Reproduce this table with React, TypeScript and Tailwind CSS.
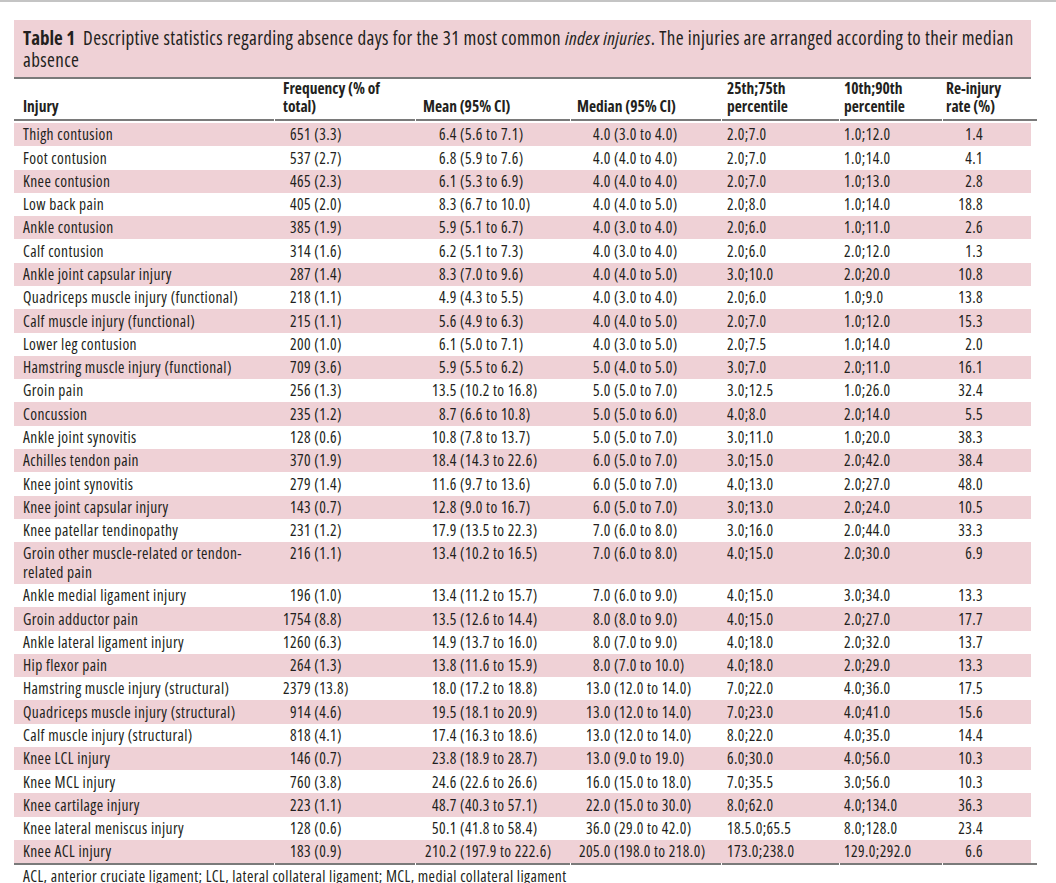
import React from "react";

// column grid shared by header, rows and rules
const COLS = "grid grid-cols-[260px_140px_154px_150px_117px_102px_94px]";

type Row = [string, string, string, string, string, string, string];

const rows: Row[] = [
  ["Thigh contusion", "651 (3.3)", "6.4 (5.6 to 7.1)", "4.0 (3.0 to 4.0)", "2.0;7.0", "1.0;12.0", "1.4"],
  ["Foot contusion", "537 (2.7)", "6.8 (5.9 to 7.6)", "4.0 (4.0 to 4.0)", "2.0;7.0", "1.0;14.0", "4.1"],
  ["Knee contusion", "465 (2.3)", "6.1 (5.3 to 6.9)", "4.0 (4.0 to 4.0)", "2.0;7.0", "1.0;13.0", "2.8"],
  ["Low back pain", "405 (2.0)", "8.3 (6.7 to 10.0)", "4.0 (4.0 to 5.0)", "2.0;8.0", "1.0;14.0", "18.8"],
  ["Ankle contusion", "385 (1.9)", "5.9 (5.1 to 6.7)", "4.0 (3.0 to 4.0)", "2.0;6.0", "1.0;11.0", "2.6"],
  ["Calf contusion", "314 (1.6)", "6.2 (5.1 to 7.3)", "4.0 (3.0 to 4.0)", "2.0;6.0", "2.0;12.0", "1.3"],
  ["Ankle joint capsular injury", "287 (1.4)", "8.3 (7.0 to 9.6)", "4.0 (4.0 to 5.0)", "3.0;10.0", "2.0;20.0", "10.8"],
  ["Quadriceps muscle injury (functional)", "218 (1.1)", "4.9 (4.3 to 5.5)", "4.0 (3.0 to 4.0)", "2.0;6.0", "1.0;9.0", "13.8"],
  ["Calf muscle injury (functional)", "215 (1.1)", "5.6 (4.9 to 6.3)", "4.0 (4.0 to 5.0)", "2.0;7.0", "1.0;12.0", "15.3"],
  ["Lower leg contusion", "200 (1.0)", "6.1 (5.0 to 7.1)", "4.0 (3.0 to 5.0)", "2.0;7.5", "1.0;14.0", "2.0"],
  ["Hamstring muscle injury (functional)", "709 (3.6)", "5.9 (5.5 to 6.2)", "5.0 (4.0 to 5.0)", "3.0;7.0", "2.0;11.0", "16.1"],
  ["Groin pain", "256 (1.3)", "13.5 (10.2 to 16.8)", "5.0 (5.0 to 7.0)", "3.0;12.5", "1.0;26.0", "32.4"],
  ["Concussion", "235 (1.2)", "8.7 (6.6 to 10.8)", "5.0 (5.0 to 6.0)", "4.0;8.0", "2.0;14.0", "5.5"],
  ["Ankle joint synovitis", "128 (0.6)", "10.8 (7.8 to 13.7)", "5.0 (5.0 to 7.0)", "3.0;11.0", "1.0;20.0", "38.3"],
  ["Achilles tendon pain", "370 (1.9)", "18.4 (14.3 to 22.6)", "6.0 (5.0 to 7.0)", "3.0;15.0", "2.0;42.0", "38.4"],
  ["Knee joint synovitis", "279 (1.4)", "11.6 (9.7 to 13.6)", "6.0 (5.0 to 7.0)", "4.0;13.0", "2.0;27.0", "48.0"],
  ["Knee joint capsular injury", "143 (0.7)", "12.8 (9.0 to 16.7)", "6.0 (5.0 to 7.0)", "3.0;13.0", "2.0;24.0", "10.5"],
  ["Knee patellar tendinopathy", "231 (1.2)", "17.9 (13.5 to 22.3)", "7.0 (6.0 to 8.0)", "3.0;16.0", "2.0;44.0", "33.3"],
  ["Groin other muscle-related or tendon-\nrelated pain", "216 (1.1)", "13.4 (10.2 to 16.5)", "7.0 (6.0 to 8.0)", "4.0;15.0", "2.0;30.0", "6.9"],
  ["Ankle medial ligament injury", "196 (1.0)", "13.4 (11.2 to 15.7)", "7.0 (6.0 to 9.0)", "4.0;15.0", "3.0;34.0", "13.3"],
  ["Groin adductor pain", "1754 (8.8)", "13.5 (12.6 to 14.4)", "8.0 (8.0 to 9.0)", "4.0;15.0", "2.0;27.0", "17.7"],
  ["Ankle lateral ligament injury", "1260 (6.3)", "14.9 (13.7 to 16.0)", "8.0 (7.0 to 9.0)", "4.0;18.0", "2.0;32.0", "13.7"],
  ["Hip flexor pain", "264 (1.3)", "13.8 (11.6 to 15.9)", "8.0 (7.0 to 10.0)", "4.0;18.0", "2.0;29.0", "13.3"],
  ["Hamstring muscle injury (structural)", "2379 (13.8)", "18.0 (17.2 to 18.8)", "13.0 (12.0 to 14.0)", "7.0;22.0", "4.0;36.0", "17.5"],
  ["Quadriceps muscle injury (structural)", "914 (4.6)", "19.5 (18.1 to 20.9)", "13.0 (12.0 to 14.0)", "7.0;23.0", "4.0;41.0", "15.6"],
  ["Calf muscle injury (structural)", "818 (4.1)", "17.4 (16.3 to 18.6)", "13.0 (12.0 to 14.0)", "8.0;22.0", "4.0;35.0", "14.4"],
  ["Knee LCL injury", "146 (0.7)", "23.8 (18.9 to 28.7)", "13.0 (9.0 to 19.0)", "6.0;30.0", "4.0;56.0", "10.3"],
  ["Knee MCL injury", "760 (3.8)", "24.6 (22.6 to 26.6)", "16.0 (15.0 to 18.0)", "7.0;35.5", "3.0;56.0", "10.3"],
  ["Knee cartilage injury", "223 (1.1)", "48.7 (40.3 to 57.1)", "22.0 (15.0 to 30.0)", "8.0;62.0", "4.0;134.0", "36.3"],
  ["Knee lateral meniscus injury", "128 (0.6)", "50.1 (41.8 to 58.4)", "36.0 (29.0 to 42.0)", "18.5.0;65.5", "8.0;128.0", "23.4"],
  ["Knee ACL injury", "183 (0.9)", "210.2 (197.9 to 222.6)", "205.0 (198.0 to 218.0)", "173.0;238.0", "129.0;292.0", "6.6"],
];

// "651 (3.3)" -> count lined up on its right edge
function Freq({ v }: { v: string }) {
  const i = v.indexOf(" ");
  return (
    <>
      <span className="inline-block w-[30px] text-right">{v.slice(0, i)}</span>
      {v.slice(i)}
    </>
  );
}

// "13.4 (10.2 to 16.5)" -> lined up on the decimal point
function Dec({ v }: { v: string }) {
  const i = v.indexOf(".");
  return (
    <>
      <span className="inline-block w-[24px] text-right">{v.slice(0, i)}</span>
      {v.slice(i)}
    </>
  );
}

function Rule() {
  return (
    <div className={`${COLS} gap-x-px`}>
      {[0, 1, 2, 3, 4, 5, 6].map((k) => (
        <div key={k} className="h-[2px] bg-[#7a7a7a]" />
      ))}
    </div>
  );
}

export default function App() {
  return (
    <div className="min-h-screen bg-white font-['Open_Sans','Roboto',sans-serif] font-stretch-semi-condensed text-[#231f20]">
      <div className="h-[2px] bg-[#c4c4c4]" />
      <div className="ml-[14px] mt-[18px] w-[1017px]">
        <div className="bg-[#efd1d6] px-[9px] pt-[7px] pb-[6px] text-[19px] leading-[22px]">
          <div className="whitespace-nowrap">
            <span className="font-bold">Table 1</span>
            <span className="ml-[8px] tracking-[0.38px]">
              Descriptive statistics regarding absence days for the 31 most common <i>index injuries</i>. The
              injuries are arranged according to their median
            </span>
          </div>
          <div className="tracking-[0.38px]">absence</div>
        </div>
        <div className="h-[2px] bg-[#7a7a7a]" />
        <div className={`${COLS} items-end pb-[4px] text-[15.5px] font-bold leading-[18px]`}>
          <div className="px-[9px]">Injury</div>
          <div className="px-[9px]">
            Frequency (% of
            <br />
            total)
          </div>
          <div className="px-[9px]">Mean (95% CI)</div>
          <div className="px-[9px]">Median (95% CI)</div>
          <div className="px-[9px]">
            25th;75th
            <br />
            percentile
          </div>
          <div className="px-[9px]">
            10th;90th
            <br />
            percentile
          </div>
          <div className="px-[9px]">
            Re-injury
            <br />
            rate (%)
          </div>
        </div>
        <Rule />
        <div className="mt-[2px] text-[15.5px] leading-[18.6px] tracking-[0.4px]">
          {rows.map((r, i) => (
            <div key={i} className={`${COLS} ${i % 2 === 0 ? "bg-[#efd1d6]" : "bg-white"}`}>
              <div className="whitespace-pre-line px-[9px] py-[2.35px]">{r[0]}</div>
              <div className="px-[7px] py-[2.35px]">
                <Freq v={r[1]} />
              </div>
              <div className="px-[8px] py-[2.35px]">
                <Dec v={r[2]} />
              </div>
              <div className="px-[8px] py-[2.35px]">
                <Dec v={r[3]} />
              </div>
              <div className="px-[9px] py-[2.35px]">{r[4]}</div>
              <div className="px-[9px] py-[2.35px]">{r[5]}</div>
              <div className="px-[9px] py-[2.35px]">
                <span className="inline-block w-[37px] text-right">{r[6]}</span>
              </div>
            </div>
          ))}
        </div>
        <Rule />
        <div className="px-[9px] pt-[2px] text-[15.5px] leading-[18px] tracking-[0.4px]">
          ACL, anterior cruciate ligament; LCL, lateral collateral ligament; MCL, medial collateral ligament
        </div>
      </div>
    </div>
  );
}
